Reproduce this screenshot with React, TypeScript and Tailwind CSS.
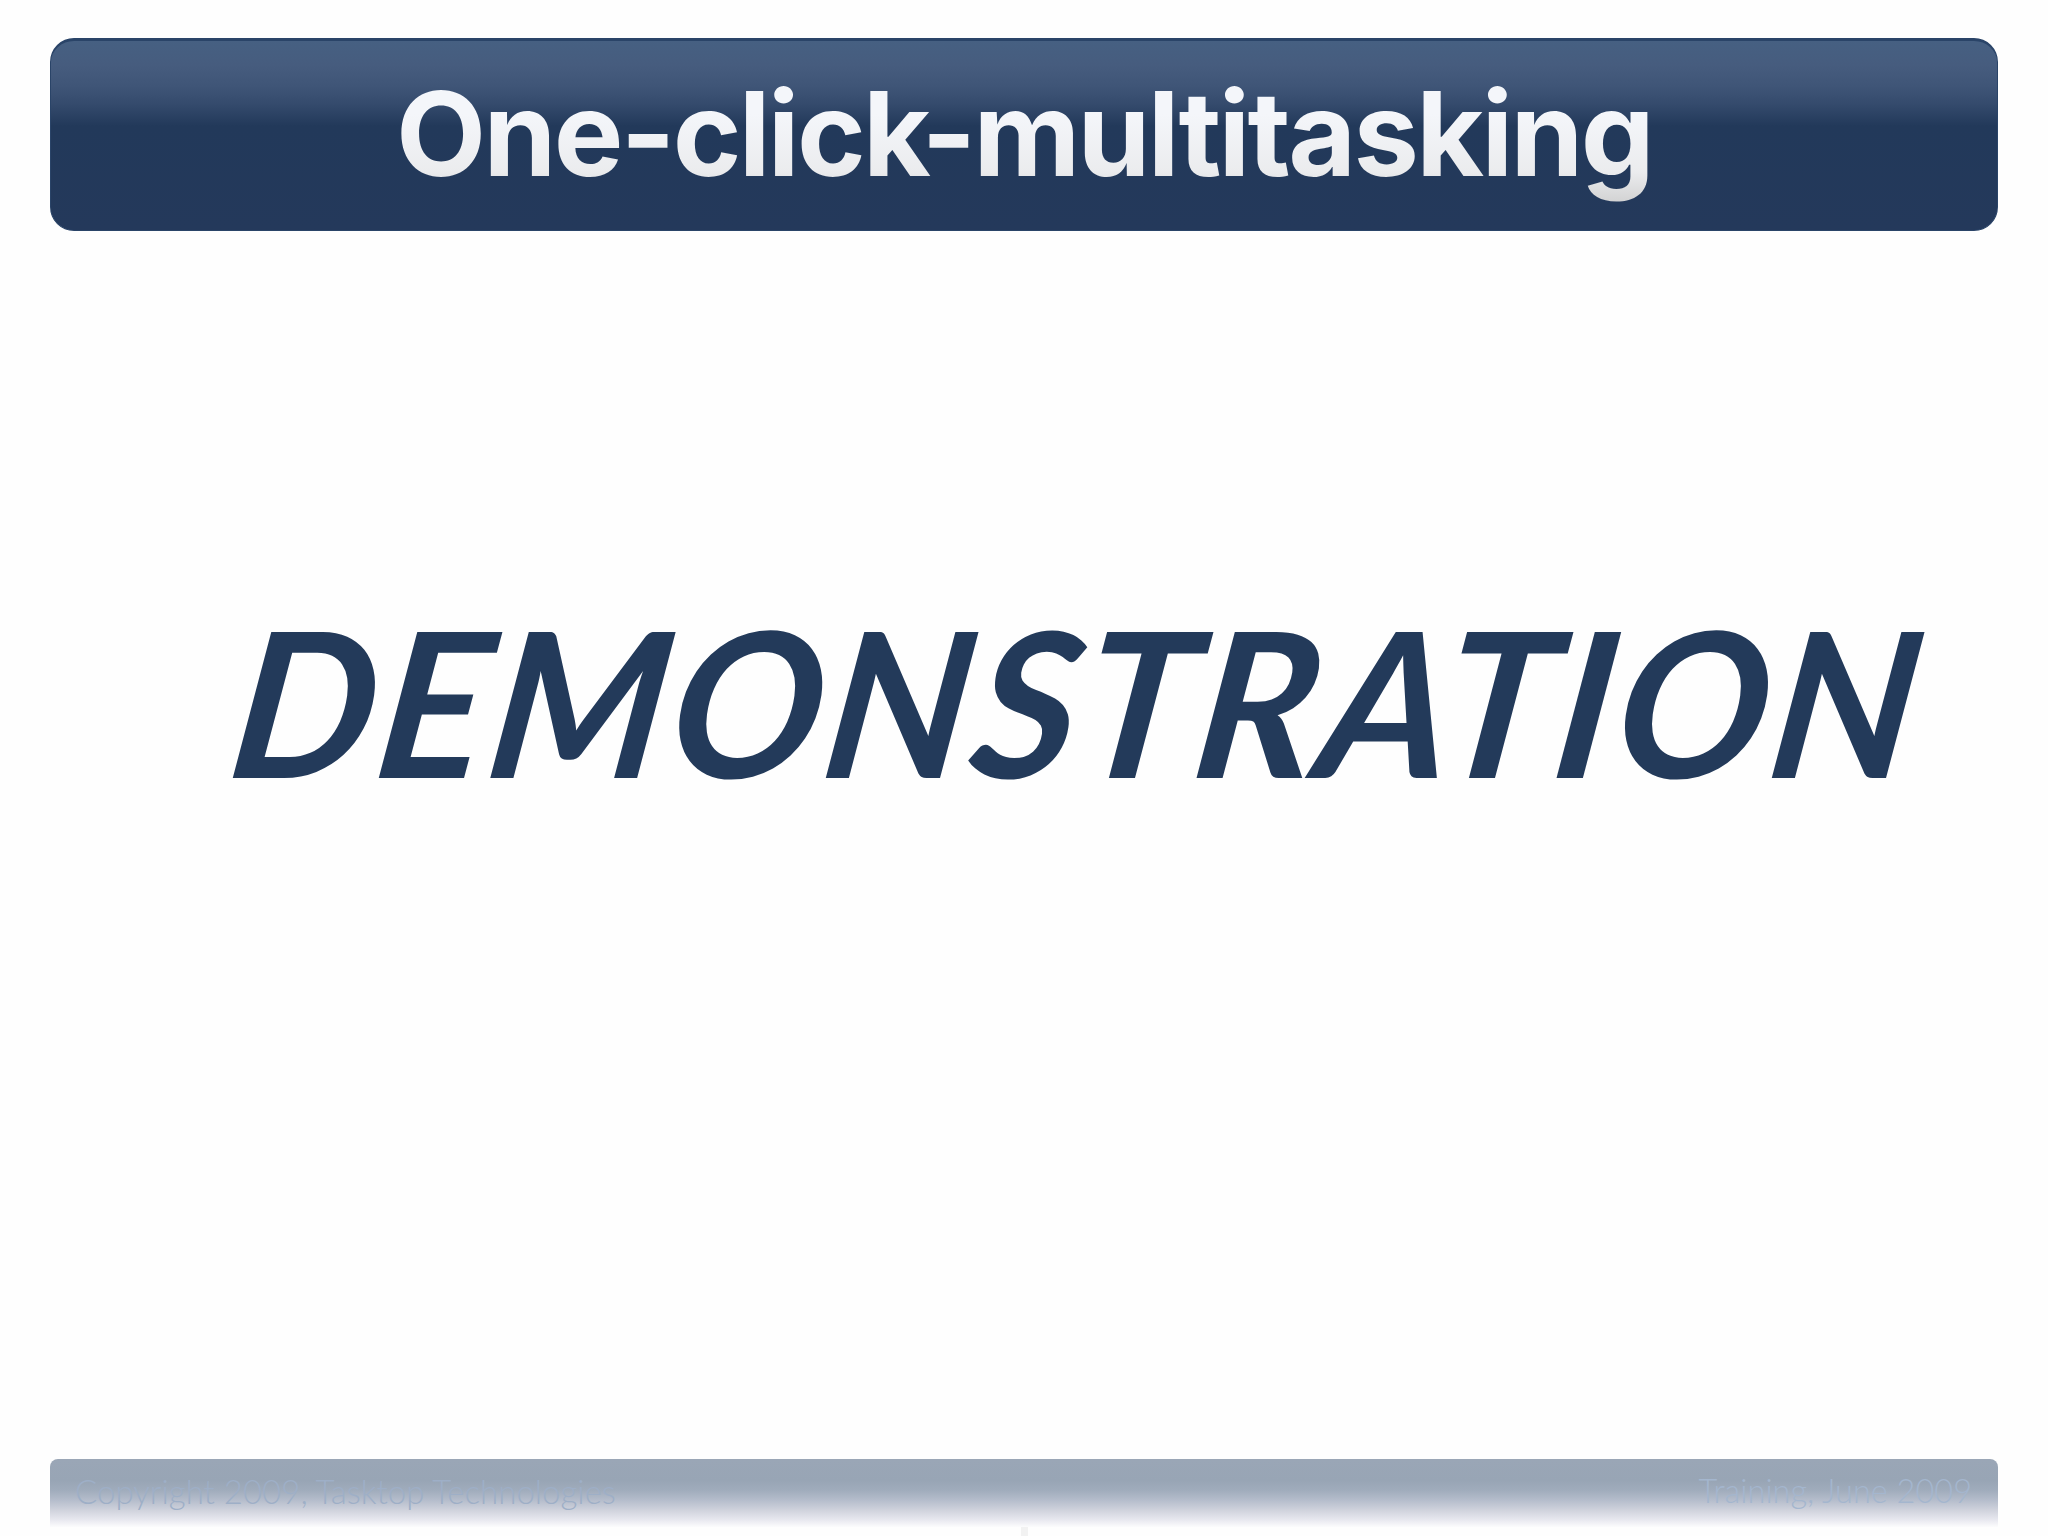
export default function App() {
  return (
    <div className="w-[2048px] h-[1536px] bg-[#fefefe] flex flex-col px-[50px] pt-[38px] overflow-hidden font-['Lato',sans-serif]">
      <header className="h-[193px] shrink-0 rounded-[24px] border border-t-[3px] border-[#2a4468] bg-[linear-gradient(180deg,#466082_0%,#465c7e_13%,#3f5577_24%,#354b6d_33%,#22395a_45%,#24395b_100%)] flex justify-center">
        <h1 className="mt-[23px] font-['Inter',sans-serif] text-[117px] leading-[140px] font-bold tracking-[-2.7px] bg-[linear-gradient(180deg,#f4f6fa_30%,#ebecee_65%,#c9c9c9_90%)] bg-clip-text text-transparent whitespace-nowrap">
          One-click-multitasking
        </h1>
      </header>
      <main className="flex-1 flex items-start pl-[186px]">
        <p className="mt-[349px] -skew-x-[8deg] text-[202px] leading-[240px] italic font-bold tracking-[3px] text-[#233a5a] whitespace-nowrap">
          DEMONSTRATION
        </p>
      </main>
      <footer className="h-[68px] shrink-0 rounded-t-[8px] bg-[linear-gradient(180deg,#9aa6b6_0%,#98a5b5_32%,#a0acbc_46%,#b4bccb_60%,#cfd2dc_75%,#e9e9f0_90%,#fcfcfd_100%)] flex justify-between items-start pl-[25px] pr-[26px] pt-[12px]">
        <span className="text-[33px] leading-[40px] font-light text-[#9eafc7]">Copyright 2009, Tasktop Technologies</span>
        <span className="text-[32.5px] leading-[40px] font-light text-[#a4b6ce]">Training, June 2009</span>
      </footer>
      <div className="mx-auto h-[9px] w-[7px] shrink-0 bg-[#f2f2f2]" />
    </div>
  );
}
